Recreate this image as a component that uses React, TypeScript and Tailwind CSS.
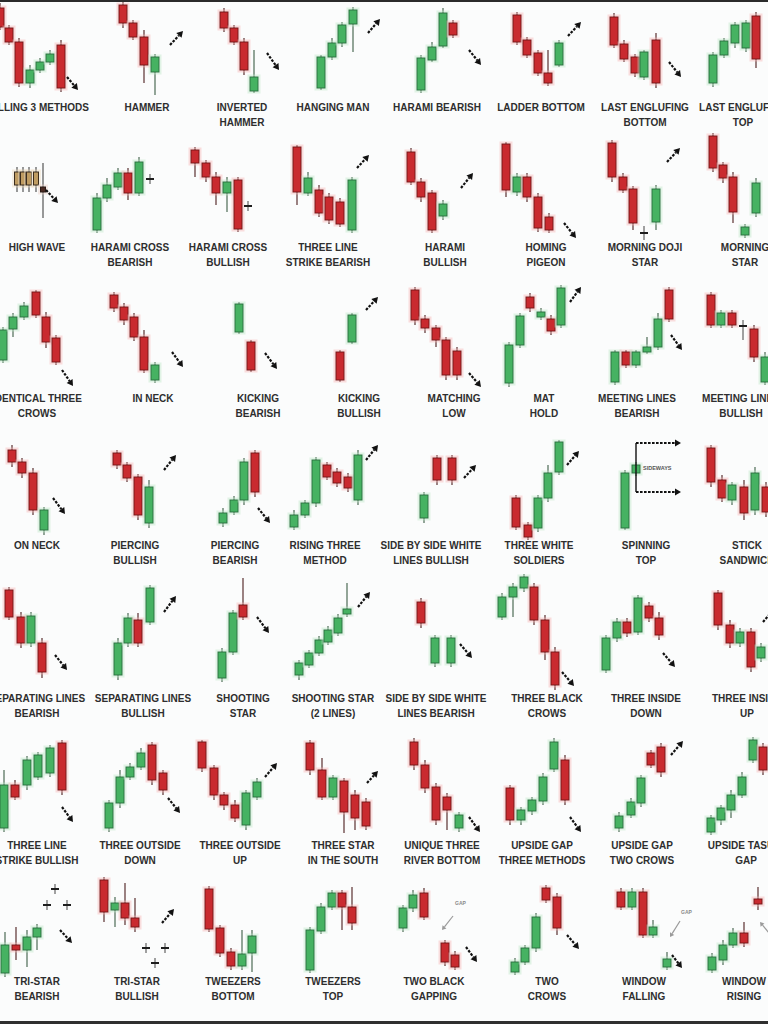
import type { ReactNode } from 'react';

// candle: [x, bodyTop, bodyBottom, wickHigh, wickLow, kind, width?]
type Kind = 'r' | 'g' | 'x' | 'n' | 'k';
type C = [number, number, number, number, number, Kind, number?];
// arrow: [x1, y1, x2, y2, gray?]
type A = [number, number, number, number, boolean?];

interface Cell {
    label: string[];
    lx: number;
    candles: C[];
    arrows?: A[];
    extra?: ReactNode;
}

interface Row {
    top: number;
    drawH: number;
    cls: string;
    cells: Cell[];
}

const PAL: Record<string, { fill: string; edge: string; halo: string; wick: string }> = {
    r: { fill: '#c92a2f', edge: '#7a1618', halo: '#f6b9b9', wick: '#5b3030' },
    g: { fill: '#46b262', edge: '#2a7440', halo: '#bfe9c9', wick: '#4d6b55' },
    n: { fill: '#bf9c62', edge: '#3b2c1c', halo: '#eadcc2', wick: '#555' },
    k: { fill: '#4a2a22', edge: '#2a1a14', halo: '#e8d0c8', wick: '#555' },
};

function Candle({ c }: { c: C }) {
    const [x, t, b, h, l, k, w0] = c;
    if (k === 'x') {
        return (
            <g>
                <line x1={x} x2={x} y1={h} y2={l} stroke="#444" strokeWidth={1} />
                <line x1={x - 4} x2={x + 4} y1={t} y2={t} stroke="#1e1e1e" strokeWidth={2} />
            </g>
        );
    }
    const w = w0 ?? 8;
    const p = PAL[k];
    const bh = Math.max(b - t, 2);
    return (
        <g>
            <line x1={x} x2={x} y1={h} y2={l} stroke={p.wick} strokeWidth={1.2} />
            <rect x={x - w / 2 - 1.5} y={t - 1.5} width={w + 3} height={bh + 3} fill="none" stroke={p.halo} strokeWidth={2} opacity={0.45} />
            <rect x={x - w / 2} y={t} width={w} height={bh} fill={p.fill} stroke={p.edge} strokeWidth={1} />
        </g>
    );
}

function Arrow({ a }: { a: A }) {
    const [x1, y1, x2, y2, gray] = a;
    const dx = x2 - x1;
    const dy = y2 - y1;
    const len = Math.hypot(dx, dy);
    const ux = dx / len;
    const uy = dy / len;
    const hl = gray ? 4 : 6;
    const hw = gray ? 2.5 : 3.6;
    const bx = x2 - ux * hl;
    const by = y2 - uy * hl;
    const col = gray ? '#9a9a9a' : '#111';
    return (
        <g>
            <line x1={x1} y1={y1} x2={bx} y2={by} stroke={col} strokeWidth={gray ? 1.2 : 2.2} strokeDasharray={gray ? undefined : '2.6 1.4'} />
            <polygon points={`${x2},${y2} ${bx - uy * hw},${by + ux * hw} ${bx + uy * hw},${by - ux * hw}`} fill={col} />
        </g>
    );
}

const Gap = ({ x, y }: { x: number; y: number }) => (
    <text x={x} y={y} fontSize={5} fill="#8a8a8a" fontFamily="Liberation Sans, sans-serif" fontWeight={700}>
        GAP
    </text>
);

const sideways = (
    <g>
        <line x1={636} y1={443} x2={636} y2={492} stroke="#111" strokeWidth={1.4} />
        <Arrow a={[636, 443, 681, 443]} />
        <Arrow a={[636, 492, 681, 492]} />
        <text x={643} y={470} fontSize={5.5} fill="#555" fontFamily="Liberation Sans, sans-serif" fontWeight={700}>
            SIDEWAYS
        </text>
    </g>
);

const hw = (x: number): C => [x, 172, 185, 167, 192, 'n', 5];

const ROWS: Row[] = [
    {
        top: 2, drawH: 98, cls: 'h-[130px]',
        cells: [
            { label: ['FALLING 3 METHODS'], lx: 37, candles: [[0, 8, 27, 3, 30, 'r'], [9, 28, 42, 25, 45, 'r'], [19, 42, 83, 38, 87, 'r'], [30, 70, 83, 65, 88, 'g'], [40, 62, 70, 58, 73, 'g'], [50, 54, 62, 50, 65, 'g'], [61, 45, 88, 40, 92, 'r']], arrows: [[67, 77, 78, 90]] },
            { label: ['HAMMER'], lx: 147, candles: [[123, 5, 23, 2, 28, 'r'], [133, 23, 37, 20, 40, 'r'], [144, 37, 65, 30, 83, 'r'], [155, 57, 72, 54, 95, 'g']], arrows: [[170, 45, 183, 31]] },
            { label: ['INVERTED', 'HAMMER'], lx: 242, candles: [[224, 12, 28, 8, 32, 'r'], [234, 28, 42, 25, 45, 'r'], [244, 42, 70, 38, 75, 'r'], [254, 77, 91, 50, 93, 'g']], arrows: [[267, 53, 279, 70]] },
            { label: ['HANGING MAN'], lx: 333, candles: [[321, 57, 88, 55, 90, 'g'], [332, 43, 57, 38, 60, 'g'], [342, 25, 43, 22, 47, 'g'], [353, 10, 24, 7, 52, 'g']], arrows: [[368, 33, 380, 19]] },
            { label: ['HARAMI BEARISH'], lx: 437, candles: [[421, 58, 90, 55, 93, 'g'], [432, 47, 60, 42, 62, 'g'], [443, 13, 46, 8, 48, 'g'], [453, 23, 35, 20, 38, 'r']], arrows: [[469, 50, 481, 65]] },
            { label: ['LADDER BOTTOM'], lx: 541, candles: [[517, 15, 42, 12, 45, 'r'], [527, 40, 55, 37, 58, 'r'], [538, 53, 73, 50, 76, 'r'], [548, 73, 83, 50, 86, 'r'], [559, 43, 65, 40, 67, 'g']], arrows: [[568, 36, 581, 22]] },
            { label: ['LAST ENGLUFING', 'BOTTOM'], lx: 645, candles: [[614, 17, 45, 13, 48, 'r'], [624, 44, 59, 40, 62, 'r'], [635, 57, 73, 54, 77, 'r'], [644, 52, 77, 50, 80, 'g'], [656, 40, 83, 33, 88, 'r']], arrows: [[669, 62, 681, 77]] },
            { label: ['LAST ENGLUFING', 'TOP'], lx: 743, candles: [[713, 55, 83, 52, 87, 'g'], [724, 41, 55, 38, 58, 'g'], [735, 25, 43, 22, 48, 'g'], [746, 23, 48, 20, 52, 'g'], [756, 16, 59, 12, 68, 'r']] },
        ],
    },
    {
        top: 132, drawH: 108, cls: 'h-[140px]',
        cells: [
            { label: ['HIGH WAVE'], lx: 37, candles: [hw(17), hw(23), hw(29), hw(36), [43, 187, 192, 163, 218, 'k', 5]], arrows: [[46, 190, 58, 203]] },
            { label: ['HARAMI CROSS', 'BEARISH'], lx: 130, candles: [[97, 198, 230, 193, 233, 'g'], [107, 185, 198, 178, 202, 'g'], [118, 173, 187, 168, 190, 'g'], [128, 173, 193, 168, 200, 'r'], [139, 162, 193, 157, 196, 'g'], [150, 179, 179, 174, 184, 'x']] },
            { label: ['HARAMI CROSS', 'BULLISH'], lx: 228, candles: [[195, 150, 163, 147, 177, 'r'], [206, 163, 177, 160, 182, 'r'], [216, 177, 193, 172, 205, 'r'], [227, 182, 193, 177, 212, 'g'], [238, 180, 229, 177, 232, 'r'], [248, 206, 206, 201, 211, 'x']] },
            { label: ['THREE LINE', 'STRIKE BEARISH'], lx: 328, candles: [[297, 147, 192, 145, 205, 'r'], [308, 178, 193, 172, 196, 'g'], [319, 190, 213, 185, 217, 'r'], [329, 197, 220, 193, 224, 'r'], [340, 202, 224, 198, 227, 'r'], [352, 180, 230, 177, 233, 'g']], arrows: [[357, 168, 369, 155]] },
            { label: ['HARAMI', 'BULLISH'], lx: 445, candles: [[411, 152, 182, 148, 185, 'r'], [421, 182, 197, 178, 202, 'r'], [432, 193, 230, 190, 233, 'r'], [443, 204, 216, 200, 220, 'g']], arrows: [[461, 188, 473, 173]] },
            { label: ['HOMING', 'PIGEON'], lx: 546, candles: [[506, 144, 190, 142, 197, 'r'], [517, 177, 192, 173, 196, 'g'], [527, 177, 197, 173, 202, 'r'], [538, 197, 228, 193, 232, 'r'], [549, 217, 230, 213, 233, 'r']], arrows: [[564, 223, 576, 238]] },
            { label: ['MORNING DOJI', 'STAR'], lx: 645, candles: [[612, 143, 177, 140, 182, 'r'], [623, 177, 190, 173, 193, 'r'], [633, 189, 223, 186, 230, 'r'], [644, 233, 233, 226, 240, 'x'], [656, 189, 222, 185, 230, 'g']], arrows: [[667, 162, 680, 148]] },
            { label: ['MORNING', 'STAR'], lx: 745, candles: [[713, 136, 168, 133, 172, 'r'], [723, 165, 178, 162, 183, 'r'], [733, 177, 212, 172, 223, 'r'], [745, 227, 235, 224, 238, 'g'], [756, 183, 213, 178, 217, 'g']] },
        ],
    },
    {
        top: 272, drawH: 119, cls: 'h-[153px]',
        cells: [
            { label: ['IDENTICAL THREE', 'CROWS'], lx: 37, candles: [[3, 330, 360, 327, 363, 'g'], [13, 317, 329, 313, 337, 'g'], [24, 306, 317, 302, 320, 'g'], [36, 292, 315, 290, 318, 'r'], [46, 317, 342, 312, 348, 'r'], [56, 338, 362, 335, 365, 'r']], arrows: [[62, 370, 73, 386]] },
            { label: ['IN NECK'], lx: 153, candles: [[114, 295, 308, 292, 312, 'r'], [124, 307, 320, 303, 325, 'r'], [134, 317, 337, 313, 341, 'r'], [144, 337, 370, 330, 373, 'r'], [155, 365, 380, 362, 383, 'g']], arrows: [[172, 352, 183, 367]] },
            { label: ['KICKING', 'BEARISH'], lx: 258, candles: [[239, 304, 332, 302, 334, 'g'], [251, 342, 370, 340, 372, 'r']], arrows: [[265, 353, 277, 369]] },
            { label: ['KICKING', 'BULLISH'], lx: 359, candles: [[340, 352, 380, 350, 382, 'r'], [352, 315, 342, 313, 344, 'g']], arrows: [[366, 310, 378, 297]] },
            { label: ['MATCHING', 'LOW'], lx: 454, candles: [[415, 290, 320, 287, 325, 'r'], [425, 319, 328, 315, 333, 'r'], [436, 328, 340, 325, 347, 'r'], [446, 340, 375, 337, 380, 'r'], [457, 351, 375, 347, 380, 'r']], arrows: [[469, 373, 481, 387]] },
            { label: ['MAT', 'HOLD'], lx: 544, candles: [[509, 345, 383, 342, 387, 'g'], [520, 316, 345, 313, 348, 'g'], [530, 297, 308, 293, 312, 'r'], [541, 312, 317, 308, 320, 'g'], [551, 319, 331, 315, 335, 'r'], [561, 288, 325, 285, 328, 'g']], arrows: [[570, 302, 581, 287]] },
            { label: ['MEETING LINES', 'BEARISH'], lx: 637, candles: [[615, 352, 382, 350, 385, 'g'], [626, 352, 365, 350, 368, 'r'], [636, 352, 365, 350, 368, 'g'], [647, 347, 352, 337, 354, 'g'], [658, 319, 347, 313, 350, 'g'], [669, 290, 319, 287, 322, 'r']], arrows: [[671, 335, 682, 350]] },
            { label: ['MEETING LINES', 'BULLISH'], lx: 741, candles: [[711, 295, 325, 292, 328, 'r'], [721, 313, 325, 310, 328, 'g'], [732, 313, 325, 310, 328, 'r'], [743, 326, 326, 320, 340, 'x'], [754, 329, 357, 325, 362, 'r'], [765, 357, 382, 352, 385, 'g']] },
        ],
    },
    {
        top: 425, drawH: 113, cls: 'h-[145px]',
        cells: [
            { label: ['ON NECK'], lx: 37, candles: [[12, 450, 462, 445, 467, 'r'], [22, 462, 473, 458, 478, 'r'], [33, 473, 510, 468, 515, 'r'], [44, 510, 530, 507, 535, 'g']], arrows: [[53, 498, 65, 514]] },
            { label: ['PIERCING', 'BULLISH'], lx: 135, candles: [[117, 453, 465, 450, 469, 'r'], [127, 465, 478, 462, 482, 'r'], [138, 477, 515, 474, 520, 'r'], [149, 487, 523, 480, 528, 'g']], arrows: [[164, 470, 176, 455]] },
            { label: ['PIERCING', 'BEARISH'], lx: 235, candles: [[223, 513, 523, 508, 527, 'g'], [234, 500, 512, 496, 515, 'g'], [244, 462, 500, 458, 505, 'g'], [255, 453, 492, 450, 497, 'r']], arrows: [[258, 508, 270, 523]] },
            { label: ['RISING THREE', 'METHOD'], lx: 325, candles: [[294, 515, 527, 510, 530, 'g'], [305, 503, 515, 500, 518, 'g'], [316, 460, 503, 457, 507, 'g'], [327, 465, 477, 462, 480, 'r'], [337, 472, 483, 468, 487, 'r'], [348, 477, 488, 473, 492, 'r'], [358, 455, 500, 450, 505, 'g']], arrows: [[366, 460, 378, 445]] },
            { label: ['SIDE BY SIDE WHITE', 'LINES BULLISH'], lx: 431, candles: [[424, 495, 518, 492, 523, 'g'], [437, 458, 480, 455, 485, 'r'], [452, 458, 480, 455, 485, 'r']], arrows: [[464, 478, 476, 465]] },
            { label: ['THREE WHITE', 'SOLDIERS'], lx: 539, candles: [[516, 498, 527, 495, 530, 'r'], [528, 525, 537, 522, 540, 'r'], [538, 498, 528, 495, 532, 'g'], [548, 473, 498, 465, 502, 'g'], [559, 442, 472, 440, 475, 'g']], arrows: [[567, 465, 579, 451]] },
            { label: ['SPINNING', 'TOP'], lx: 646, candles: [[625, 473, 528, 470, 530, 'g'], [636, 465, 473, 462, 476, 'g']], extra: sideways },
            { label: ['STICK', 'SANDWICH'], lx: 747, candles: [[711, 448, 482, 445, 487, 'r'], [722, 480, 498, 475, 502, 'r'], [732, 485, 500, 482, 505, 'g'], [744, 487, 513, 480, 520, 'r'], [755, 473, 510, 467, 515, 'g'], [766, 487, 512, 482, 517, 'r']] },
        ],
    },
    {
        top: 570, drawH: 121, cls: 'h-[152px]',
        cells: [
            { label: ['SEPARATING LINES', 'BEARISH'], lx: 37, candles: [[9, 590, 617, 587, 620, 'r'], [21, 617, 643, 612, 648, 'r'], [31, 616, 643, 612, 647, 'g'], [42, 643, 672, 638, 678, 'r']], arrows: [[55, 655, 67, 670]] },
            { label: ['SEPARATING LINES', 'BULLISH'], lx: 143, candles: [[118, 643, 675, 638, 680, 'g'], [128, 618, 643, 613, 647, 'g'], [138, 620, 643, 613, 647, 'r'], [150, 588, 622, 585, 625, 'g']], arrows: [[164, 612, 176, 596]] },
            { label: ['SHOOTING', 'STAR'], lx: 243, candles: [[222, 652, 678, 648, 682, 'g'], [233, 613, 652, 610, 655, 'g'], [243, 605, 617, 578, 620, 'r']], arrows: [[257, 617, 269, 633]] },
            { label: ['SHOOTING STAR', '(2 LINES)'], lx: 333, candles: [[299, 663, 675, 660, 680, 'g'], [309, 653, 665, 650, 668, 'g'], [319, 640, 653, 636, 656, 'g'], [328, 630, 642, 626, 645, 'g'], [338, 618, 633, 614, 636, 'g'], [347, 609, 614, 583, 617, 'g']], arrows: [[358, 607, 370, 592]] },
            { label: ['SIDE BY SIDE WHITE', 'LINES BEARISH'], lx: 436, candles: [[421, 602, 623, 598, 628, 'r'], [435, 638, 663, 635, 667, 'g'], [451, 638, 663, 635, 667, 'g']], arrows: [[460, 644, 472, 658]] },
            { label: ['THREE BLACK', 'CROWS'], lx: 547, candles: [[502, 597, 617, 593, 620, 'g'], [513, 587, 597, 583, 617, 'g'], [524, 577, 588, 574, 592, 'g'], [534, 587, 620, 583, 625, 'r'], [545, 620, 652, 615, 660, 'r'], [555, 652, 685, 647, 690, 'r']], arrows: [[562, 672, 574, 686]] },
            { label: ['THREE INSIDE', 'DOWN'], lx: 646, candles: [[606, 638, 670, 635, 673, 'g'], [617, 622, 638, 618, 642, 'g'], [627, 622, 633, 618, 637, 'r'], [638, 598, 632, 595, 635, 'g'], [649, 606, 618, 602, 622, 'r'], [659, 618, 635, 612, 640, 'r']], arrows: [[663, 653, 675, 667]] },
            { label: ['THREE INSIDE', 'UP'], lx: 747, candles: [[718, 593, 625, 590, 630, 'r'], [730, 625, 643, 620, 648, 'r'], [740, 632, 643, 628, 647, 'g'], [751, 632, 667, 628, 672, 'r'], [761, 647, 658, 643, 662, 'g']], arrows: [[763, 622, 775, 608]] },
        ],
    },
    {
        top: 722, drawH: 116, cls: 'h-[146px]',
        cells: [
            { label: ['THREE LINE', 'STRIKE BULLISH'], lx: 37, candles: [[4, 785, 828, 770, 832, 'g'], [15, 785, 797, 780, 800, 'r'], [27, 760, 785, 756, 790, 'g'], [38, 755, 777, 752, 780, 'g'], [50, 748, 773, 745, 777, 'g'], [62, 743, 790, 740, 795, 'r']], arrows: [[62, 807, 73, 822]] },
            { label: ['THREE OUTSIDE', 'DOWN'], lx: 140, candles: [[109, 803, 828, 800, 832, 'g'], [120, 777, 803, 770, 808, 'g'], [130, 767, 777, 763, 780, 'g'], [141, 753, 767, 748, 770, 'g'], [152, 745, 780, 742, 785, 'r'], [163, 773, 790, 770, 795, 'r']], arrows: [[168, 798, 180, 813]] },
            { label: ['THREE OUTSIDE', 'UP'], lx: 240, candles: [[202, 742, 768, 740, 772, 'r'], [214, 768, 795, 765, 800, 'r'], [224, 795, 805, 792, 810, 'r'], [235, 805, 818, 800, 822, 'r'], [246, 793, 825, 790, 830, 'g'], [257, 782, 797, 778, 800, 'g']], arrows: [[265, 777, 277, 763]] },
            { label: ['THREE STAR', 'IN THE SOUTH'], lx: 343, candles: [[310, 743, 770, 740, 775, 'r'], [322, 770, 797, 758, 800, 'r'], [333, 778, 797, 775, 800, 'g'], [344, 781, 812, 778, 833, 'r'], [355, 795, 818, 790, 830, 'r'], [366, 802, 826, 798, 830, 'r']], arrows: [[367, 783, 378, 771]] },
            { label: ['UNIQUE THREE', 'RIVER BOTTOM'], lx: 442, candles: [[414, 742, 765, 738, 770, 'r'], [425, 765, 788, 760, 793, 'r'], [436, 787, 820, 783, 825, 'r'], [447, 797, 810, 793, 830, 'r'], [459, 815, 828, 812, 832, 'g']], arrows: [[469, 817, 480, 832]] },
            { label: ['UPSIDE GAP', 'THREE METHODS'], lx: 542, candles: [[510, 788, 820, 785, 825, 'r'], [521, 810, 820, 807, 825, 'g'], [532, 800, 811, 797, 815, 'g'], [543, 777, 801, 773, 805, 'g'], [554, 742, 769, 738, 772, 'g'], [565, 760, 800, 755, 805, 'r']], arrows: [[570, 817, 581, 832]] },
            { label: ['UPSIDE GAP', 'TWO CROWS'], lx: 642, candles: [[619, 816, 828, 812, 832, 'g'], [631, 802, 815, 798, 818, 'g'], [641, 778, 803, 775, 807, 'g'], [651, 753, 765, 750, 768, 'r'], [661, 747, 772, 743, 777, 'r']], arrows: [[671, 755, 683, 741]] },
            { label: ['UPSIDE TASUKI', 'GAP'], lx: 746, candles: [[711, 818, 832, 815, 835, 'g'], [721, 808, 820, 805, 825, 'g'], [731, 795, 810, 790, 818, 'g'], [742, 777, 795, 772, 798, 'g'], [753, 740, 760, 737, 763, 'g'], [763, 747, 770, 743, 775, 'r']] },
        ],
    },
    {
        top: 868, drawH: 106, cls: 'h-[153px]',
        cells: [
            { label: ['TRI-STAR', 'BEARISH'], lx: 37, candles: [[5, 945, 973, 932, 977, 'g'], [16, 945, 950, 927, 960, 'r'], [27, 937, 950, 930, 967, 'g'], [37, 928, 937, 924, 950, 'g'], [47, 905, 905, 900, 910, 'x'], [55, 889, 889, 884, 894, 'x'], [67, 905, 905, 900, 910, 'x']], arrows: [[60, 930, 72, 943]] },
            { label: ['TRI-STAR', 'BULLISH'], lx: 137, candles: [[104, 880, 912, 877, 922, 'r'], [115, 903, 910, 897, 927, 'g'], [125, 903, 918, 883, 925, 'r'], [135, 918, 927, 898, 932, 'r'], [146, 948, 948, 943, 953, 'x'], [155, 963, 963, 958, 968, 'x'], [165, 948, 948, 943, 953, 'x']], arrows: [[162, 923, 174, 909]] },
            { label: ['TWEEZERS', 'BOTTOM'], lx: 233, candles: [[209, 889, 929, 886, 932, 'r'], [220, 928, 953, 925, 957, 'r'], [231, 952, 966, 948, 970, 'r'], [242, 954, 966, 930, 970, 'g'], [252, 936, 953, 930, 972, 'g']] },
            { label: ['TWEEZERS', 'TOP'], lx: 333, candles: [[310, 930, 970, 927, 973, 'g'], [321, 907, 931, 903, 934, 'g'], [332, 893, 907, 890, 910, 'g'], [342, 893, 907, 890, 930, 'r'], [352, 907, 923, 887, 930, 'r']] },
            { label: ['TWO BLACK', 'GAPPING'], lx: 434, candles: [[403, 908, 928, 905, 932, 'g'], [413, 895, 908, 890, 912, 'g'], [424, 893, 917, 888, 920, 'r'], [445, 943, 962, 940, 966, 'r'], [455, 955, 967, 951, 970, 'r']], arrows: [[466, 947, 477, 962], [453, 916, 442, 930, true]], extra: <Gap x={455} y={905} /> },
            { label: ['TWO', 'CROWS'], lx: 547, candles: [[515, 962, 972, 958, 975, 'g'], [525, 948, 962, 945, 965, 'g'], [536, 917, 948, 913, 952, 'g'], [546, 888, 900, 885, 903, 'r'], [557, 897, 928, 893, 935, 'r']], arrows: [[567, 935, 579, 949]] },
            { label: ['WINDOW', 'FALLING'], lx: 644, candles: [[621, 892, 907, 888, 910, 'r'], [632, 892, 907, 888, 910, 'g'], [643, 892, 935, 888, 938, 'r'], [653, 927, 935, 920, 938, 'g'], [667, 959, 967, 952, 970, 'g']], arrows: [[672, 955, 682, 968], [680, 921, 670, 937, true]], extra: <Gap x={681} y={914} /> },
            { label: ['WINDOW', 'RISING'], lx: 744, candles: [[712, 957, 970, 953, 973, 'g'], [723, 945, 960, 940, 965, 'g'], [733, 933, 945, 928, 948, 'g'], [744, 933, 943, 922, 947, 'r'], [758, 899, 904, 887, 910, 'r']], arrows: [[769, 933, 760, 922, true]] },
        ],
    },
];

function PatternCell({ cell, x0, row }: { cell: Cell; x0: number; row: Row }) {
    const shift = cell.lx - (x0 + 50);
    return (
        <div className="w-[100px] shrink-0 flex flex-col items-center">
            <svg width={100} height={row.drawH} viewBox={`${x0} ${row.top} 100 ${row.drawH}`} className="block shrink-0 overflow-visible">
                {cell.candles.map((c, i) => (
                    <Candle key={i} c={c} />
                ))}
                {cell.arrows?.map((a, i) => (
                    <Arrow key={i} a={a} />
                ))}
                {cell.extra}
            </svg>
            <div
                className="flex flex-col items-center whitespace-nowrap text-[10px] leading-[15px] font-bold text-[#2e2e2e]"
                style={{ transform: `translateX(${shift}px)` }}
            >
                {cell.label.map((l) => (
                    <span key={l}>{l}</span>
                ))}
            </div>
        </div>
    );
}

export default function App() {
    return (
        <div className="w-[768px] h-[1024px] overflow-hidden bg-[#fbfcfc] flex flex-col border-t-2 border-[#2b2b2b] font-['Liberation_Sans',Arial,sans-serif]">
            {ROWS.map((row) => (
                <div key={row.top} className={`flex shrink-0 w-[800px] -ml-[10px] ${row.cls}`}>
                    {row.cells.map((cell, i) => (
                        <PatternCell key={i} cell={cell} x0={-10 + i * 100} row={row} />
                    ))}
                </div>
            ))}
            <div className="h-[3px] shrink-0 bg-[#2f2f2f]" />
        </div>
    );
}
